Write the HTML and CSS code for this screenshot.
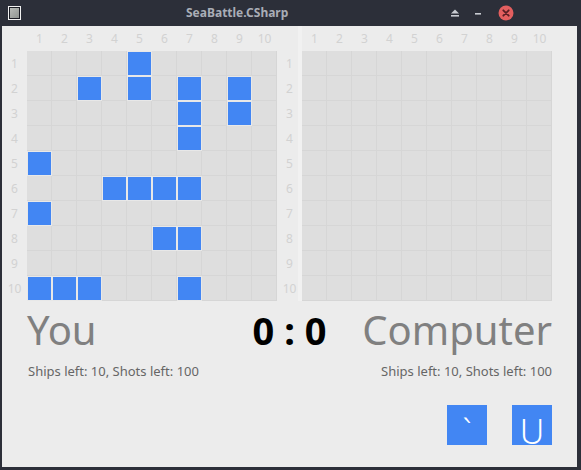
FILE: index.html
```html
<!DOCTYPE html>
<html>
<head>
<meta charset="utf-8">
<link rel="stylesheet" href="styles.css">
</head>
<body>
<div class="window">
  <div class="titlebar">
    <div class="app-icon"><div class="app-icon-inner"></div></div>
    <div class="title">SeaBattle.CSharp</div>
    <div class="controls">
      <svg class="ctl" width="12" height="12" viewBox="0 0 12 12"><path d="M2 6.5 L6 2.5 L10 6.5 Z" fill="#c9ccd2"/><rect x="2" y="8" width="8" height="1.6" fill="#c9ccd2"/></svg>
      <svg class="ctl" width="12" height="12" viewBox="0 0 12 12"><rect x="3" y="6" width="6" height="1.6" fill="#c9ccd2"/></svg>
      <svg class="ctl close" width="16" height="16" viewBox="0 0 16 16"><circle cx="8" cy="8" r="7.5" fill="#e35f5f"/><path d="M5.3 5.3 L10.7 10.7 M10.7 5.3 L5.3 10.7" stroke="#5a1f24" stroke-width="1.8" stroke-linecap="round"/></svg>
    </div>
  </div>
  <div class="content">
    <div class="boards">
      <div class="board" id="b1">
        <div class="corner"></div>
        <div class="colhead"></div>
        <div class="rowhead"></div>
        <div class="grid"></div>
      </div>
      <div class="board second" id="b2">
        <div class="corner"></div>
        <div class="colhead"></div>
        <div class="rowhead"></div>
        <div class="grid"></div>
      </div>
    </div>
    <div class="scores">
      <div class="name">You</div>
      <div class="score">0 : 0</div>
      <div class="name right">Computer</div>
    </div>
    <div class="stats">
      <div>Ships left: 10, Shots left: 100</div>
      <div>Ships left: 10, Shots left: 100</div>
    </div>
    <div class="actions">
      <div class="btn">`</div>
      <div class="btn">U</div>
    </div>
  </div>
</div>
<script>
  var ships = [[1,5],[2,3],[2,5],[2,7],[2,9],[3,7],[3,9],[4,7],[5,1],[6,4],[6,5],[6,6],[6,7],[7,1],[8,6],[8,7],[10,1],[10,2],[10,3],[10,7]];
  var set = {};
  ships.forEach(function(s){ set[s[0]+'_'+s[1]] = true; });
  ['b1','b2'].forEach(function(id, bi){
    var b = document.getElementById(id);
    var ch = b.querySelector('.colhead'), rh = b.querySelector('.rowhead'), g = b.querySelector('.grid');
    for (var i = 1; i <= 10; i++) {
      var c = document.createElement('div'); c.className = 'lbl'; c.textContent = i; ch.appendChild(c);
      var r = document.createElement('div'); r.className = 'lbl'; r.textContent = i; rh.appendChild(r);
    }
    for (var y = 1; y <= 10; y++) for (var x = 1; x <= 10; x++) {
      var cell = document.createElement('div'); cell.className = 'cell';
      if (bi === 0 && set[y+'_'+x]) { var s = document.createElement('div'); s.className = 'ship'; cell.appendChild(s); }
      g.appendChild(cell);
    }
  });
</script>
</body>
</html>
```

FILE: styles.css
```css
html, body { margin: 0; padding: 0; }
body { background: #2c2f39; font-family: "Noto Sans", "Open Sans", sans-serif; }
.window { width: 581px; height: 470px; background: #2c2f39; display: flex; flex-direction: column; }
.titlebar { height: 26px; display: flex; align-items: center; position: relative; }
.app-icon { width: 13px; height: 14px; margin-left: 8px; border: 1px solid #f2f2f2; background: #1b1d24; box-sizing: border-box; padding: 1px; }
.app-icon-inner { width: 100%; height: 100%; background: linear-gradient(135deg, #b9bcb8, #8f9490); }
.title { position: absolute; left: 186px; top: 4px; color: #a9adb6; font-weight: bold; font-size: 12px; line-height: 18px; }
.controls { margin-left: auto; margin-right: 67px; display: flex; align-items: center; gap: 11px; }
.ctl { display: block; }
.close { margin-left: 3px; }
.content { background: #ececec; margin: 0 4px 3px 2px; flex: 1; display: flex; flex-direction: column; }
.boards { display: flex; }
.board { display: grid; grid-template-columns: 25px 250px; grid-template-rows: 25px 250px; }
.second { background: linear-gradient(to right, #ececec 21px, #f1f1f1 21px, #f1f1f1 25px, transparent 25px); }
.colhead { display: grid; grid-template-columns: repeat(10, 25px); }
.rowhead { display: grid; grid-template-rows: repeat(10, 25px); }
.lbl { display: flex; align-items: center; justify-content: center; font-size: 12px; color: #d2d2d2; }
.grid { display: grid; grid-template-columns: repeat(10, 25px); grid-template-rows: repeat(10, 25px); background: #dedede; }
.cell { box-sizing: border-box; border-right: 1px solid #d6d6d6; border-bottom: 1px solid #d6d6d6; position: relative; }
.ship { position: absolute; left: 1px; top: 1px; width: 23px; height: 23px; background: #4286f3; box-shadow: 0 0 0 1px #e8e8e8; }
.scores { display: grid; grid-template-columns: 1fr auto 1fr; align-items: baseline; padding: 0 25px 0 25px; margin-top: 6px; height: 46px; }
.name { font-size: 40px; color: #808080; line-height: 46px; }
.right { justify-self: end; }
.score { font-size: 38px; font-weight: bold; color: #000; line-height: 46px; }
.stats { display: flex; justify-content: space-between; padding: 0 25px 0 26px; margin-top: 9px; font-size: 13px; color: #666; }
.actions { display: flex; justify-content: flex-end; gap: 25px; padding-right: 25px; margin-top: 25px; }
.btn { width: 40px; height: 40px; box-sizing: border-box; padding-top: 12px; background: #4286f3; color: #fff; font-size: 34px; font-weight: 300; line-height: 28px; text-align: center; }
```
